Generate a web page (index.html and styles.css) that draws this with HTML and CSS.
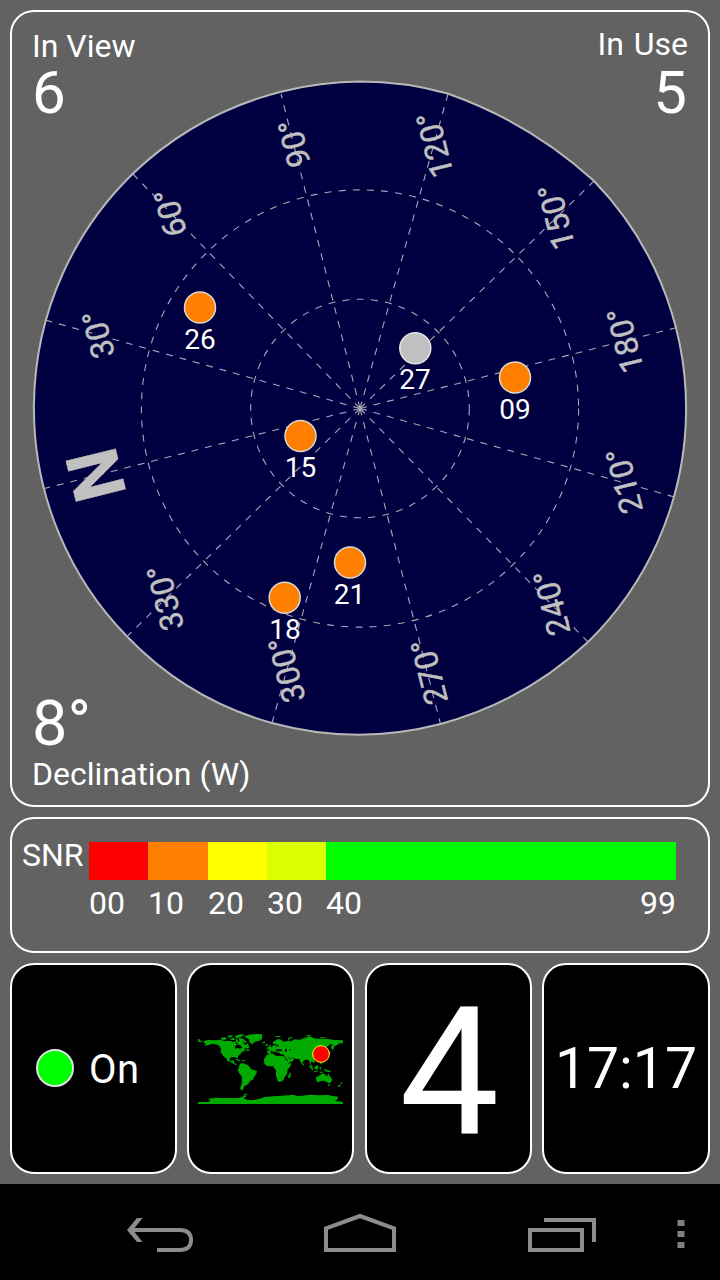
FILE: index.html
```
<!DOCTYPE html>
<html lang="en">
<head>
    <meta charset="UTF-8">
    <meta name="viewport" content="width=device-width, initial-scale=1.0">
    <title>GPS Status</title>
    <link rel="stylesheet" href="styles.css">
</head>
<body>

<div class="app">
    <div class="panel sky">
        <svg class="radar" viewBox="12 12 696 793">
            <path class="horizon" d="M360 81.500 A327 327 0 0 1 447.500 93.500 A430 430 0 0 1 593.500 180.500 A327 327 0 0 1 588 642 A350 350 0 0 1 440.500 724 A327 327 0 0 1 272 723 A320 320 0 0 1 127 636.500 A327 327 0 0 1 133 173.500 A335 335 0 0 1 282 91.500 A327 327 0 0 1 360 81.500 Z"/>
            <g class="grid">
                <circle cx="360" cy="408.5" r="109.3"/>
                <circle cx="360" cy="408.5" r="218.6"/>
                <g class="spokes">
                    <path d="M360 408.5 L44.5 488.5"/>
                    <path d="M360 408.5 L45 320"/>
                    <path d="M360 408.5 L133 174"/>
                    <path d="M360 408.5 L281 94"/>
                    <path d="M360 408.5 L448 94"/>
                    <path d="M360 408.5 L594 181"/>
                    <path d="M360 408.5 L675 328"/>
                    <path d="M360 408.5 L674.5 497"/>
                    <path d="M360 408.5 L588 642"/>
                    <path d="M360 408.5 L440.5 724"/>
                    <path d="M360 408.5 L272 723"/>
                    <path d="M360 408.5 L127 636.5"/>
                </g>
            </g>
            <g class="bearings">
                <text class="north" transform="translate(95.7 475) rotate(-104)" dy="25.6">N</text>
                <text transform="translate(98 334.500) rotate(-104)" dy="11.500">30°</text>
                <text transform="translate(170 213) rotate(-104)" dy="11.500">60°</text>
                <text transform="translate(294 143.500) rotate(-104)" dy="11.500">90°</text>
                <text transform="translate(434.500 145) rotate(-104)" dy="11.500">120°</text>
                <text transform="translate(556 217) rotate(-104)" dy="11.500">150°</text>
                <text transform="translate(624.800 340.500) rotate(-104)" dy="11.500">180°</text>
                <text transform="translate(624 481) rotate(-104)" dy="11.500">210°</text>
                <text transform="translate(551.500 603) rotate(-104)" dy="11.500">240°</text>
                <text transform="translate(429 672) rotate(-104)" dy="11.500">270°</text>
                <text transform="translate(286.500 670) rotate(-104)" dy="11.500">300°</text>
                <text transform="translate(165 598) rotate(-104)" dy="11.500">330°</text>
            </g>
            <g class="satellites">
                <circle cx="200" cy="307.5" r="15.5"/>
                <text x="200" y="349">26</text>
                <circle class="unused" cx="415.3" cy="348.3" r="15.5"/>
                <text x="415" y="389">27</text>
                <circle cx="515" cy="377.5" r="15.5"/>
                <text x="515" y="419">09</text>
                <circle cx="300.5" cy="436" r="15.5"/>
                <text x="300.5" y="477">15</text>
                <circle cx="350" cy="562.5" r="15.5"/>
                <text x="349.5" y="604">21</text>
                <circle cx="284.7" cy="597.7" r="15.5"/>
                <text x="285" y="639">18</text>
            </g>
        </svg>
        <div class="readout in-view">
            <div>In View</div>
            <div class="value">6</div>
        </div>
        <div class="readout in-use">
            <div>In Use</div>
            <div class="value">5</div>
        </div>
        <div class="readout declination">
            <div class="value">8°</div>
            <div>Declination (W)</div>
        </div>
    </div>

    <div class="panel snr">
        <div class="snr-label">SNR</div>
        <div class="scale">
            <div class="bar red"></div>
            <div class="bar orange"></div>
            <div class="bar yellow"></div>
            <div class="bar lime"></div>
            <div class="bar green"></div>
            <span>00</span>
            <span>10</span>
            <span>20</span>
            <span>30</span>
            <span class="last"><span>40</span><span>99</span></span>
        </div>
    </div>

    <div class="tiles">
        <div class="panel tile power">
            <span class="led"></span>
            <span class="state">On</span>
        </div>
        <div class="panel tile">
            <svg class="map" viewBox="54 42 435 210">
                <g class="land">
                    <!-- North America -->
                    <path d="M54 57h5v5h8v4H54z"/>
                    <path d="M72 64L84 59L102 61L124 60L134 63L150 62L158 66L166 64L176 66L178 60L174 54L184 56L186 62L192 66L190 72L198 74L204 70L208 84L192 86L197 92L186 95L182 102L174 108L174 116L168 112L154 112L148 117L151 124L161 120L163 128L171 134L166 135L156 128L142 123L138 115L130 109L126 101L122 98L123 84L114 75L98 71L84 76L72 77L78 71L70 68z"/>
                    <path d="M123 54l10-3 8 4-7 5-10-1zM142 48l14-3 3 4-12 5zM150 56l12-3 3 6-11 2zM164 48l12-4 18-2-10 9-14 4zM178 54l12 2 10 9-3 5-10-8zM166 117l9 1 6 3-3 2-12-4zM184 121h12v3h-12zM168 58h6v7h-6z"/>
                    <path d="M192 49L206 44L230 42L247 43L246 57L238 62L225 65L217 73L210 68L206 58z"/>
                    <path d="M247 65h8v4h-8zM199 88h9v4h-9z"/>
                    <!-- South America -->
                    <path d="M178 135L184 129L194 131L205 136L213 147L231 153L229 162L222 171L219 179L211 182L205 191L199 196L193 199L189 208L191 210L183 209L180 205L185 193L186 171L177 159L173 150L176 145z"/>
                    <!-- Europe and Asia -->
                    <path d="M262 100L261 92L271 91L266 84L276 81L281 75L288 76L290 73L278 71L279 66L293 57L303 59L311 65L325 62L334 64L344 58L359 59L376 53L390 49L402 55L424 57L443 57L463 60L489 61L489 70L479 70L473 74L461 80L454 88L453 79L461 74L450 73L442 80L430 82L437 89L426 97L423 107L414 114L402 119L406 127L400 128L394 123L393 132L400 141L394 137L387 122L379 118L369 124L367 134L361 125L358 117L345 116L333 112L344 119L335 125L321 130L315 120L312 109L313 104L300 102L297 97L290 98L286 93L282 98L274 91L273 96L271 103z"/>
                    <path d="M263 80h5v8h-7zM268 74h4v12h7v4h-12zM286 48h16v3h-16zM324 54l10-3 7 2-10 2-6 6zM379 46h12v3h-12zM420 52h16v3h-16zM457 82l5-4v8l-6 4zM445 98l6-6v8l-7 5zM256 73h8v4h-8z"/>
                    <!-- Africa -->
                    <path d="M261 104L278 100L284 106L292 108L306 107L314 110L316 119L323 130L334 130L331 139L323 149L321 162L314 172L310 181L300 186L294 184L288 167L288 151L282 144L280 138L263 139L253 132L252 118z"/>
                    <path d="M329 160l4-3-2 15-5 3-2-7zM368 131h4v5h-4z"/>
                    <!-- Islands and Australia -->
                    <path d="M388 134l8 6 5 9-4 1-9-10zM403 142l9-7 4 5-4 9-7-1zM401 152h13v3h-13zM418 141h7l-4 5 3 5h-4zM419 124l6 4 2 7-6-4zM432 146l8 3 10 3 3 5-10-2-7-1zM419 155h11v3h-11z"/>
                    <path d="M408 171L418 167L426 161L435 161L436 167L442 167L445 160L450 170L456 176L455 184L449 190L440 187L434 182L424 183L411 187L409 180zM444 193h6v4h-6zM482 187h4v5h-4zM477 194l6 1-6 6h-4z"/>
                    <!-- Antarctica -->
                    <path d="M54 246H84L92 242L84 237L105 233L126 234L154 234L174 234L187 231L194 224L199 229L190 235L203 240L220 240L241 236L252 231L282 229L304 227L325 226L340 224L350 228L367 227L390 224L416 226L444 225L457 228L474 230L473 237L465 242L489 246V252H54zM193 221h9v3h-9z"/>
                </g>
                <path class="water" d="M164 79l8-5 9 2 6 7-7 3-8-2-5 2zM167 67l6 2-1 5-5-2zM287 89l14-2 8 4-8 3-13-1zM315 86h5v9h-4zM287 79l8-5 2 2-6 5zM328 88h5v3h-5zM325 110l6 5 2 5-7-6zM314 108l10 14-3 1-8-13z"/>
                <circle class="here" cx="423" cy="102" r="25"/>
            </svg>
        </div>
        <div class="panel tile fix">4</div>
        <div class="panel tile clock">17:17</div>
    </div>
</div>

<div class="navbar">
    <svg width="72" height="48" viewBox="124 1208 72 48">
        <path d="M130 1230H179.5C187.5 1230 191 1234 191 1240S187.5 1250 179.5 1250H157"/>
        <path class="arrow" d="M127 1230L137 1218H142.500L133 1230L142.500 1242H137Z"/>
    </svg>
    <svg width="74" height="48" viewBox="323 1208 74 48">
        <path d="M326 1250V1228.3L360 1216L394 1228.3V1250Z"/>
    </svg>
    <svg width="72" height="48" viewBox="526 1208 72 48">
        <path d="M530 1230H582V1250H530ZM544 1220H594V1242"/>
    </svg>
    <svg class="more" width="18" height="48" viewBox="672 1208 18 48">
        <path d="M677.5 1220h7v6h-7zM677.5 1231h7v6h-7zM677.5 1242h7v6h-7z"/>
    </svg>
</div>

</body>
</html>
```

FILE: styles.css
```
* {
    box-sizing: border-box;
}
body {
    margin: 0;
    width: 720px;
    height: 1280px;
    display: flex;
    flex-direction: column;
    background-color: #000;
    color: #fff;
    font-family: Roboto, sans-serif;
    font-size: 32px;
    overflow: hidden;
}
.app {
    height: 1184px;
    padding: 10px;
    display: flex;
    flex-direction: column;
    gap: 10px;
    background-color: #626262;
}
.panel {
    border: 2px solid #fff;
    border-radius: 24px;
}

/* sky view */
.sky {
    position: relative;
    height: 797px;
}
.radar {
    display: block;
    width: 696px;
    height: 793px;
}
.horizon {
    fill: #000040;
    stroke: #b8b8b8;
    stroke-width: 2;
}
.grid {
    fill: none;
    stroke: #a8a8b4;
    stroke-width: 1.1;
    stroke-dasharray: 7 7.2;
}
.spokes {
    stroke-dasharray: 7 6.9;
}
.bearings {
    fill: #c0c0c0;
    stroke: #c0c0c0;
    stroke-width: 0.4;
    font-size: 32px;
    text-anchor: middle;
}
.north {
    font-size: 72px;
    font-weight: bold;
}
.satellites {
    fill: #fff;
    font-size: 28px;
    text-anchor: middle;
}
.satellites circle {
    fill: #ff8000;
    stroke: #d8d8d8;
    stroke-width: 1.5;
}
.satellites .unused {
    fill: #c0c0c0;
    stroke: #e4e4e4;
}
.readout {
    position: absolute;
    line-height: 32px;
}
.value {
    font-size: 60px;
    line-height: 60px;
}
.in-view {
    top: 18px;
    left: 20px;
}
.in-view .value {
    margin-top: 1px;
}
.in-use {
    top: 16px;
    right: 20px;
    text-align: right;
    word-spacing: 2px;
}
.in-use .value {
    margin-top: 3px;
    padding-right: 1px;
}
.declination {
    bottom: 15px;
    left: 20px;
}
.declination .value {
    font-size: 63px;
    line-height: 64px;
    margin-bottom: 2px;
}

/* signal scale */
.snr {
    height: 136px;
    padding: 23px 0 0 10px;
    display: flex;
}
.snr-label {
    width: 67px;
    line-height: 26px;
}
.scale {
    display: grid;
    grid-template-columns: 59px 60px 59px 59px 350px;
    grid-template-rows: 38px 38px;
    row-gap: 4px;
    line-height: 38px;
}
.red {
    background-color: #f00;
}
.orange {
    background-color: #ff8000;
}
.yellow {
    background-color: #ff0;
}
.lime {
    background-color: #d9ff00;
}
.green {
    background-color: #0f0;
}
.last {
    display: flex;
    justify-content: space-between;
}

/* bottom tiles */
.tiles {
    height: 211px;
    display: grid;
    grid-template-columns: 167px 167px 167px 168px;
    justify-content: space-between;
}
.tile {
    display: flex;
    align-items: center;
    justify-content: center;
    background-color: #000;
}
.power {
    justify-content: flex-start;
    padding-left: 24px;
    gap: 15px;
    font-size: 40px;
}
.state {
    padding-top: 1px;
    letter-spacing: 0.5px;
}
.led {
    width: 38px;
    height: 38px;
    margin-bottom: 1px;
    border: 2px solid #e0e0e0;
    border-radius: 50%;
    background-color: #0f0;
}
.map {
    width: 145px;
    height: 70px;
}
.land {
    fill: #00aa00;
}
.water {
    fill: #000;
}
.here {
    fill: #f00;
    stroke: #ff0;
    stroke-width: 3;
}
.fix {
    padding: 6px 0 0 2px;
    font-size: 178px;
    line-height: 178px;
}
.clock {
    font-size: 57px;
}

/* system navigation */
.navbar {
    height: 96px;
    padding: 24px 0 0 124px;
    display: grid;
    grid-template-columns: 199px 203px 146px 18px;
    background-color: #000;
}
.navbar svg {
    fill: none;
    stroke: #8c8c8c;
    stroke-width: 4;
}
.navbar .arrow {
    fill: #8c8c8c;
    stroke: none;
}
.navbar .more {
    fill: #808080;
    stroke: none;
}
```
